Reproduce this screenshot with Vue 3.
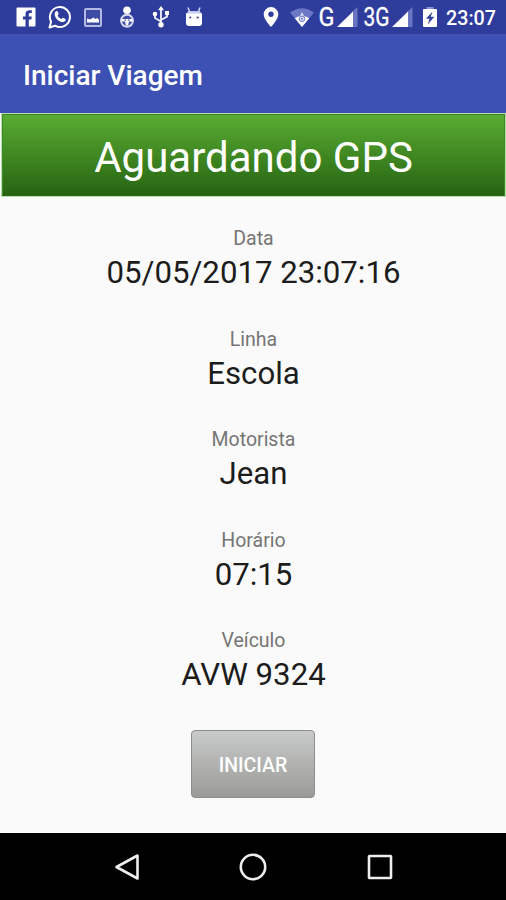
<template>
  <div class="screen">
    <header class="status-bar">
      <div class="notifications">
        <span class="slot">
          <svg width="20" height="20" viewBox="0 0 20 20">
            <path fill="#fff" d="M1.500 0.500h17a1 1 0 0 1 1 1v17a1 1 0 0 1-1 1h-5.700v-7h2.500l.5-3h-3V7.600c0-1 .5-1.500 1.500-1.500h1.500V3.300h-2.300c-2.700 0-4 1.500-4 3.900v2.300H7v3h2.500v7h-8a1 1 0 0 1-1-1v-17a1 1 0 0 1 1-1z" />
          </svg>
        </span>
        <span class="slot">
          <svg width="24" height="24" viewBox="0 0 24 24">
            <path fill="none" stroke="#fff" stroke-width="2" stroke-linejoin="round" d="M1.500 22.500l1.600-5.800a10 10 0 1 1 3.900 4z" />
            <path fill="#fff" d="M8 6.300c.5-.5 1.300-.5 1.600.1l1 2.200c.2.500-.1.900-.9 1.800.8 1.700 2 2.800 3.900 3.600.8-.9 1.100-1.400 1.600-1.200l2.200 1.100c.5.300.4 1 .1 1.700-.6 1.200-2.300 1.800-3.800 1.400-3.400-.9-6-3.500-6.900-6.600-.4-1.600.1-3.200 1.200-4.100z" />
          </svg>
        </span>
        <span class="slot">
          <svg width="18" height="19" viewBox="0 0 18 19">
            <rect x="1" y="1" width="16" height="17" rx="1" fill="#3d4ba5" stroke="#b3b9e2" stroke-width="2" />
            <path fill="#fff" d="M3 14.500v-4l3 1 3.500-2 1.500 1.500 2-1 2 1.500v3z" />
          </svg>
        </span>
        <span class="slot">
          <svg width="16" height="22" viewBox="0 0 16 22">
            <circle cx="8" cy="4.300" r="3.800" fill="#fff" />
            <path fill="#d2d7f2" d="M5.300 8h5.400l1 2H4.300z" />
            <circle cx="8" cy="14.800" r="6" fill="#4250aa" stroke="#d3d8f1" stroke-width="2" />
            <path fill="#fff" d="M2.500 13h11v2.500h-3.500l-1 4H7l-1-4H2.500z" />
            <path fill="#4250aa" d="M5.500 13.500h1.500v1.200H5.500zM9 13.500h1.500v1.200H9z" />
          </svg>
        </span>
        <span class="slot">
          <svg width="18" height="22" viewBox="0 0 18 22">
            <path fill="none" stroke="#e8eafa" stroke-width="1.900" d="M9 3v15M9 15.500l-6-3.500V8.500M9 14l6-3.300V7" />
            <path fill="#fff" d="M9 0l3 4.300H6zM13 5h4v4h-4z" />
            <circle cx="3" cy="8" r="2.300" fill="#fff" />
            <circle cx="9" cy="18.800" r="2.700" fill="#fff" />
          </svg>
        </span>
        <span class="slot">
          <svg width="18" height="22" viewBox="0 0 18 22">
            <path stroke="#c9d0f2" stroke-width="1.600" d="M3 1.500l1.500 4M15 1.500l-1.500 4" />
            <path fill="#c5ccf1" d="M3.500 5h11l2.500 3H1z" />
            <path fill="#fff" d="M1 7.500h16v9.500a3 3 0 0 1-3 3H4a3 3 0 0 1-3-3z" />
            <circle cx="5.300" cy="11.500" r="1.100" fill="#3b478c" />
            <circle cx="12.700" cy="11.500" r="1.100" fill="#3b478c" />
          </svg>
        </span>
      </div>

      <div class="system">
        <svg width="16" height="20" viewBox="0 0 16 20">
          <path fill="#fff" fill-rule="evenodd" d="M8 0a7.300 7.300 0 0 1 7.300 7.300C15.300 12.500 8 20 8 20S.7 12.500.7 7.300A7.300 7.300 0 0 1 8 0zm0 4.600a2.700 2.700 0 1 0 0 5.400 2.700 2.700 0 0 0 0-5.400z" />
        </svg>
        <svg class="wifi" width="24" height="19" viewBox="0 0 24 19">
          <path fill="#6c78c5" d="M0 4.500Q12-4 24 4.500L12 19z" />
          <path fill="#fff" d="M4.800 10.300q7.200-5.200 14.400 0L12 19z" />
          <path fill="#dfe3f6" d="M12 4l2 4h-4z" />
          <circle cx="12" cy="10.800" r="2.800" fill="#dfe3f6" stroke="#6b78c4" stroke-width="1" />
          <circle cx="12" cy="10.800" r="1" fill="#6b78c4" />
        </svg>
        <svg class="net-g" width="18" height="32" viewBox="0 0 18 32">
          <text class="net" x="0.500" y="25" textLength="16" lengthAdjust="spacingAndGlyphs">G</text>
        </svg>
        <svg class="signal" width="21" height="20" viewBox="0 0 21 20">
          <path fill="#6975c2" d="M15 5l5.500-5v20H15z" />
          <path fill="#fff" d="M0 20L16 4.500V20z" />
        </svg>
        <svg class="net-3g" width="28" height="32" viewBox="0 0 28 32">
          <text class="net" x="0.500" y="25" textLength="26" lengthAdjust="spacingAndGlyphs">3G</text>
        </svg>
        <svg class="signal" width="21" height="20" viewBox="0 0 21 20">
          <path fill="#6975c2" d="M15 5l5.500-5v20H15z" />
          <path fill="#fff" d="M0 20L16 4.500V20z" />
        </svg>
        <svg class="battery" width="14" height="20" viewBox="0 0 14 20">
          <path fill="#8993d1" d="M3.500 0h7v2.500h-7z" />
          <rect y="2" width="14" height="18" rx="1" fill="#fff" />
          <path fill="#303f9f" d="M9.500 4.500L3 11.700h3.500L4.800 17.500l6.500-7.700H7.700z" />
        </svg>
        <span class="clock">23:07</span>
      </div>
    </header>

    <div class="app-bar">
      <h1>Iniciar Viagem</h1>
    </div>

    <main>
      <div class="gps-banner">Aguardando GPS</div>

      <dl>
        <div v-for="campo in campos" :key="campo.label" class="campo">
          <dt>{{ campo.label }}</dt>
          <dd>{{ campo.valor }}</dd>
        </div>
      </dl>

      <button class="btn-iniciar">INICIAR</button>
    </main>

    <nav class="nav-bar">
      <svg width="28" height="28" viewBox="0 0 28 28">
        <path d="M24.500 2.500v23L3.500 14z" />
      </svg>
      <svg width="28" height="28" viewBox="0 0 28 28">
        <circle cx="14" cy="14" r="12.200" />
      </svg>
      <svg width="28" height="28" viewBox="0 0 28 28">
        <rect x="3" y="3" width="22" height="22" rx="0.500" />
      </svg>
    </nav>
  </div>
</template>

<script setup>
import { ref } from 'vue'

const campos = ref([
  { label: 'Data', valor: '05/05/2017 23:07:16' },
  { label: 'Linha', valor: 'Escola' },
  { label: 'Motorista', valor: 'Jean' },
  { label: 'Horário', valor: '07:15' },
  { label: 'Veículo', valor: 'AVW 9324' }
])
</script>

<style>
body {
  margin: 0;
  background: #fafafa;
}
</style>

<style scoped>
.screen {
  width: 506px;
  height: 900px;
  display: flex;
  flex-direction: column;
  overflow: hidden;
  background: #fafafa;
  font-family: Roboto, 'Liberation Sans', sans-serif;
}
svg {
  display: block;
  flex: none;
}

/* status bar */
.status-bar {
  height: 34px;
  flex: none;
  display: flex;
  justify-content: space-between;
  background: #2e3c9c;
}
.notifications {
  display: flex;
  align-items: center;
  padding-left: 9px;
}
.slot {
  width: 33.7px;
  display: flex;
  justify-content: center;
}
.system {
  display: flex;
  align-items: center;
  padding-right: 10px;
  color: #fff;
}
.wifi {
  margin-left: 11px;
}
.net-g {
  margin-left: 4px;
}
.signal {
  margin-left: 1px;
}
.net-3g {
  margin-left: 5px;
}
.net {
  font-size: 25px;
  fill: #fff;
  stroke: #fff;
  stroke-width: 0.3;
  overflow: visible;
}
.net-g,
.net-3g {
  overflow: visible;
}
.battery {
  margin-left: 10px;
}
.clock {
  margin-left: 9px;
  padding-top: 2px;
  width: 50px;
  font-size: 19.700px;
  font-weight: 500;
  white-space: nowrap;
}

/* app bar */
.app-bar {
  box-sizing: border-box;
  height: 79px;
  flex: none;
  display: flex;
  align-items: center;
  padding: 4px 0 0 23px;
  background: #3d50b3;
}
h1 {
  margin: 0;
  font-size: 28px;
  font-weight: 500;
  color: #fff;
}

/* content */
main {
  flex: 1;
  display: flex;
  flex-direction: column;
  align-items: center;
}
.gps-banner {
  box-sizing: border-box;
  align-self: stretch;
  height: 82px;
  margin: 1px 1px 1px 2px;
  border: 1px solid #3b8a22;
  border-bottom-color: #2c6914;
  background: linear-gradient(#59ac33, #276412);
  box-shadow: 0 0 0 1px #b9dcb0;
  color: #fff;
  font-size: 42px;
  line-height: 85px;
  text-align: center;
}
dl {
  margin: 27px 0 0 1px;
  text-align: center;
}
.campo {
  height: 100.500px;
}
dt {
  font-size: 19.500px;
  line-height: 29px;
  color: #757575;
}
dd {
  margin: 0;
  font-size: 31.200px;
  line-height: 40px;
  color: #1c1c1c;
}
.btn-iniciar {
  width: 124px;
  height: 68px;
  margin: 3px 0 0;
  padding: 3px 0 0;
  border: 1px solid #8c8e8c;
  border-radius: 4px;
  background: linear-gradient(#c8cbca, #9b9a97);
  color: #fff;
  font-family: inherit;
  font-size: 19.500px;
  font-weight: 500;
}

/* navigation bar */
.nav-bar {
  height: 67px;
  flex: none;
  display: flex;
  justify-content: center;
  align-items: center;
  gap: 98.500px;
  background: #000;
}
.nav-bar svg {
  fill: none;
  stroke: #eee;
  stroke-width: 2.600;
  stroke-linejoin: round;
}
</style>
